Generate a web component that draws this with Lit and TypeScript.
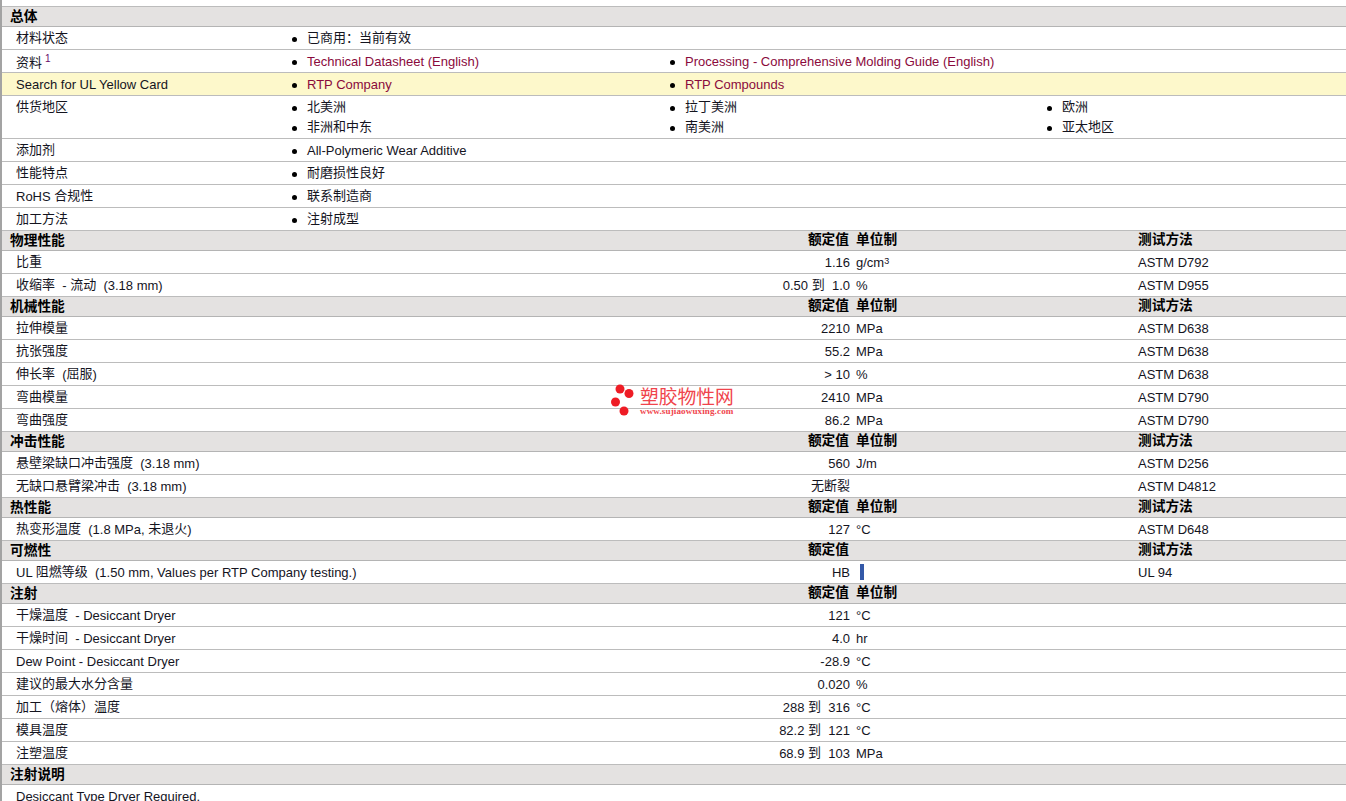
import { LitElement, html, css, nothing } from "lit";
import { customElement } from "lit/decorators.js";

type Link = { t: string; link?: boolean };
type Info = { label: string; sup?: string; hl?: boolean; cols: Link[][] };
type Data = { label: string; value: string; unit?: unknown; method?: string };
type Section = { title: string; info?: Info[]; data?: Data[]; heads?: [string, string, string]; note?: string };

const SECS: Section[] = [
  {
    title: "总体",
    info: [
      { label: "材料状态", cols: [[{ t: "已商用：当前有效" }]] },
      { label: "资料", sup: "1", cols: [[{ t: "Technical Datasheet (English)", link: true }], [{ t: "Processing - Comprehensive Molding Guide (English)", link: true }]] },
      { label: "Search for UL Yellow Card", hl: true, cols: [[{ t: "RTP Company", link: true }], [{ t: "RTP Compounds", link: true }]] },
      { label: "供货地区", cols: [[{ t: "北美洲" }, { t: "非洲和中东" }], [{ t: "拉丁美洲" }, { t: "南美洲" }], [{ t: "欧洲" }, { t: "亚太地区" }]] },
      { label: "添加剂", cols: [[{ t: "All-Polymeric Wear Additive" }]] },
      { label: "性能特点", cols: [[{ t: "耐磨损性良好" }]] },
      { label: "RoHS 合规性", cols: [[{ t: "联系制造商" }]] },
      { label: "加工方法", cols: [[{ t: "注射成型" }]] },
    ],
  },
  {
    title: "物理性能", heads: ["额定值", "单位制", "测试方法"],
    data: [
      { label: "比重", value: "1.16", unit: html`g/cm<span class="cube">3</span>`, method: "ASTM D792" },
      { label: "收缩率  - 流动  (3.18 mm)", value: "0.50 到  1.0", unit: "%", method: "ASTM D955" },
    ],
  },
  {
    title: "机械性能", heads: ["额定值", "单位制", "测试方法"],
    data: [
      { label: "拉伸模量", value: "2210", unit: "MPa", method: "ASTM D638" },
      { label: "抗张强度", value: "55.2", unit: "MPa", method: "ASTM D638" },
      { label: "伸长率  (屈服)", value: "> 10", unit: "%", method: "ASTM D638" },
      { label: "弯曲模量", value: "2410", unit: "MPa", method: "ASTM D790" },
      { label: "弯曲强度", value: "86.2", unit: "MPa", method: "ASTM D790" },
    ],
  },
  {
    title: "冲击性能", heads: ["额定值", "单位制", "测试方法"],
    data: [
      { label: "悬壁梁缺口冲击强度  (3.18 mm)", value: "560", unit: "J/m", method: "ASTM D256" },
      { label: "无缺口悬臂梁冲击  (3.18 mm)", value: "无断裂", method: "ASTM D4812" },
    ],
  },
  {
    title: "热性能", heads: ["额定值", "单位制", "测试方法"],
    data: [{ label: "热变形温度  (1.8 MPa, 未退火)", value: "127", unit: "°C", method: "ASTM D648" }],
  },
  {
    title: "可燃性", heads: ["额定值", "", "测试方法"],
    data: [{ label: "UL 阻燃等级  (1.50 mm, Values per RTP Company testing.)", value: "HB", unit: html`<span class="bar"></span>`, method: "UL 94" }],
  },
  {
    title: "注射", heads: ["额定值", "单位制", ""],
    data: [
      { label: "干燥温度  - Desiccant Dryer", value: "121", unit: "°C" },
      { label: "干燥时间  - Desiccant Dryer", value: "4.0", unit: "hr" },
      { label: "Dew Point - Desiccant Dryer", value: "-28.9", unit: "°C" },
      { label: "建议的最大水分含量", value: "0.020", unit: "%" },
      { label: "加工（熔体）温度", value: "288 到  316", unit: "°C" },
      { label: "模具温度", value: "82.2 到  121", unit: "°C" },
      { label: "注塑温度", value: "68.9 到  103", unit: "MPa" },
    ],
  },
  { title: "注射说明", note: "Desiccant Type Dryer Required." },
];

/* Chinese runs sit one pixel higher against the Latin baseline in the original. */
const mixed = (s: string) =>
  s.split(/([\u4e00-\u9fff（）：]+)/).map((part, i) => (i % 2 ? html`<span class="cjk">${part}</span>` : part));

@customElement("app-root")
export class AppRoot extends LitElement {
  static styles = css`
    :host {
      display: block;
      position: relative;
      height: 801px;
      overflow: hidden;
      box-sizing: border-box;
      background: #fff;
      border-left: 2px solid #a3a3a3;
      padding-top: 6px;
      color: #14141e;
      font: 13px/20px "Liberation Sans", "Noto Sans CJK SC", sans-serif;
    }
    .sheet { border-top: 1px solid #bcbcbc; }
    .cjk { line-height: 0; vertical-align: 1px; }
    .head, .data {
      display: grid;
      grid-template-columns: 420px 428px 288px 1fr;
    }
    .head {
      height: 19px;
      background: #e4e2e1;
      border-bottom: 1px solid #b4b4b4;
      font-weight: 700;
      font-size: 13.7px;
      line-height: 17px;
      color: #000;
    }
    .head .title { padding-left: 8px; line-height: 19px; }
    .head .num { padding-right: 1px; }
    .num { text-align: right; white-space: pre; }
    .unit { padding-left: 6px; white-space: pre; }
    .data, .info, .note {
      padding: 2px 0 0;
      border-bottom: 1px solid #bcbcbc;
    }
    .label { padding-left: 14px; white-space: pre; }
    .label.has-sup { padding-top: 2px; margin-bottom: -2px; }
    .info {
      display: grid;
      grid-template-columns: 289px 378px 377px 1fr;
    }
    .hl { background: #fdf8cb; }
    .col { display: flex; flex-direction: column; }
    .item {
      display: flex;
      align-items: center;
      gap: 10px;
      padding-left: 1px;
    }
    .item::before {
      content: "";
      width: 5px;
      height: 5px;
      border-radius: 50%;
      background: #000;
      flex: none;
    }
    .link { color: #8a0a3c; }
    sup {
      color: #6a0a6a;
      font-size: 10px;
      line-height: 0;
      vertical-align: 6px;
      margin-left: 3px;
    }
    .cube { font-size: 9px; line-height: 0; vertical-align: 3px; }
    .bar {
      display: block;
      width: 4px;
      height: 16px;
      margin: 1px 0 0 4px;
      background: #3459a8;
    }
    .mark {
      position: absolute;
      left: 607px;
      top: 382px;
      display: flex;
      gap: 1px;
      color: #f0444c;
      pointer-events: none;
    }
    .mark svg { display: block; width: 30px; height: 36px; }
    .mark-text { display: flex; flex-direction: column; padding-top: 4px; }
    .brand { font: 18.8px/20px "Noto Sans CJK SC", sans-serif; }
    .url { font: 700 9.1px/10px "Liberation Serif", serif; letter-spacing: 0.1px; }
  `;

  private infoRow(r: Info) {
    return html`<div class="info ${r.hl ? "hl" : ""}">
      <div class="label ${r.sup ? "has-sup" : ""}">${mixed(r.label)}${r.sup ? html`<sup>${r.sup}</sup>` : nothing}</div>
      ${r.cols.map((c) => html`<div class="col">
        ${c.map((i) => html`<div class="item"><span class=${i.link ? "link" : ""}>${mixed(i.t)}</span></div>`)}
      </div>`)}
    </div>`;
  }

  private dataRow(r: Data) {
    return html`<div class="data">
      <div class="label">${mixed(r.label)}</div>
      <div class="num">${mixed(r.value)}</div>
      <div class="unit">${r.unit ?? ""}</div>
      <div>${r.method ?? ""}</div>
    </div>`;
  }

  render() {
    return html`<div class="sheet">
        ${SECS.map((s) => html`
          <div class="head">
            <div class="title">${s.title}</div>
            <div class="num">${s.heads?.[0] ?? ""}</div>
            <div class="unit">${s.heads?.[1] ?? ""}</div>
            <div>${s.heads?.[2] ?? ""}</div>
          </div>
          ${s.info?.map((r) => this.infoRow(r))}
          ${s.data?.map((r) => this.dataRow(r))}
          ${s.note ? html`<div class="note"><div class="label">${s.note}</div></div>` : nothing}
        `)}
      </div>
      <div class="mark">
        <svg viewBox="0 0 30 36" aria-hidden="true">
          <circle cx="11" cy="7" r="4.5" fill="#ee1c25" />
          <circle cx="20" cy="11.5" r="4.5" fill="#ee1c25" />
          <circle cx="6.5" cy="20" r="4.5" fill="#ee1c25" />
          <circle cx="15" cy="29" r="4.5" fill="#ee1c25" />
        </svg>
        <div class="mark-text">
          <span class="brand">塑胶物性网</span>
          <span class="url">www.sujiaowuxing.com</span>
        </div>
      </div>`;
  }
}
